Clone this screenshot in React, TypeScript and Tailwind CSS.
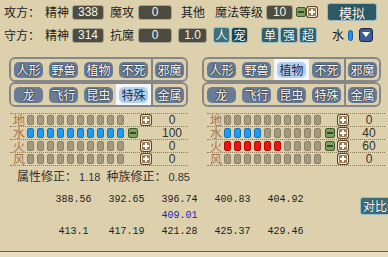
import React from "react";

const rows1 = ["388.56", "392.65", "396.74", "400.83", "404.92"];
const rows3 = ["413.1", "417.19", "421.28", "425.37", "429.46"];

function ValBox({ v, className }: { v: string; className: string }) {
  return (
    <div
      className={`h-[15px] rounded-[3px] border border-[#a4a290] bg-[#4d4c3f] text-[#f4f4ec] flex items-center justify-center text-[12px] leading-none font-['Liberation_Sans',sans-serif] ${className}`}
    >
      {v}
    </div>
  );
}

function TealBtn({ label, className }: { label: string; className: string }) {
  return (
    <div
      className={`flex items-center justify-center rounded-[3px] border border-[#9cbcc4] text-white text-[12px] leading-none [text-shadow:0_0_1px_#0b2a33] ${className}`}
    >
      {label}
    </div>
  );
}

function Minus() {
  return (
    <div className="w-[10px] h-[10px] rounded-[2px] bg-[#7f9f5e] border border-[#3f5a2c] flex items-center justify-center">
      <div className="w-[6px] h-[2px] bg-[#f4f8ee] border-y border-[#34492a]" />
    </div>
  );
}

function Plus() {
  return (
    <div className="relative w-[10px] h-[10px] rounded-[2px] bg-[#9d7c50] border border-[#f1e8d4] shadow-[0_0_0_1px_#5a4428]">
      <div className="absolute left-[3px] top-[1px] w-[2px] h-[6px] bg-white" />
      <div className="absolute left-[1px] top-[3px] w-[6px] h-[2px] bg-white" />
    </div>
  );
}

function CatRow({ items, sel }: { items: string[]; sel: number }) {
  return (
    <div className="flex h-[25px] rounded-[6px] border-2 border-[#878787] overflow-hidden">
      {items.map((t, i) => (
        <div
          key={t}
          className={`w-[35px] h-full flex items-center justify-center ${i === 4 ? "border-l-2 border-[#878787]" : ""} ${i === sel ? "bg-[#f3f6fa]" : ""}`}
        >
          <div
            className={`w-[29px] h-[16px] rounded-[5px] flex items-center justify-center text-[12px] leading-none ${
              i === sel
                ? "bg-[#b3cfec] text-[#16305a]"
                : "bg-[#6a7c95] text-white [text-shadow:0_0_2px_#10141c,0_0_1px_#10141c]"
            }`}
          >
            {t}
          </div>
        </div>
      ))}
    </div>
  );
}

function CatPanel({ sel1, sel2 }: { sel1: number; sel2: number }) {
  return (
    <div className="flex flex-col">
      <CatRow items={["人形", "野兽", "植物", "不死", "邪魔"]} sel={sel1} />
      <CatRow items={["龙", "飞行", "昆虫", "特殊", "金属"]} sel={sel2} />
    </div>
  );
}

type El = { name: string; n: number; color: string; minus: boolean; plus: boolean; v: string };

function ElemRows({ list, className }: { list: El[]; className: string }) {
  return (
    <div className={`border-t border-dotted border-[#8f7f5c] ${className}`}>
      {list.map((e) => (
        <div key={e.name} className="flex items-center h-[13px] border-b border-dotted border-[#8f7f5c] pl-[3px]">
          <span className="w-[12px] text-[12px] leading-none text-[#a9714a]">{e.name}</span>
          <div className="ml-[2px] flex gap-[3px]">
            {Array.from({ length: 10 }).map((_, i) => (
              <div
                key={i}
                className={`w-[7px] h-[10px] rounded-[2px] border ${
                  i < e.n ? `${e.color}` : "bg-[#a39a7e] border-[#8a8168]"
                }`}
              />
            ))}
          </div>
          <div className="ml-[4px] w-[10px]">{e.minus && <Minus />}</div>
          <div className="ml-[3px] w-[10px]">{e.plus && <Plus />}</div>
          <span className="ml-[6px] w-[30px] text-center text-[12px] leading-none text-[#333] font-['Liberation_Sans',sans-serif]">
            {e.v}
          </span>
        </div>
      ))}
    </div>
  );
}

const blue = "bg-[#1f9bf0] border-[#1577c2]";
const red = "bg-[#f01212] border-[#b30a0a]";

const left: El[] = [
  { name: "地", n: 0, color: blue, minus: false, plus: true, v: "0" },
  { name: "水", n: 10, color: blue, minus: true, plus: false, v: "100" },
  { name: "火", n: 0, color: red, minus: false, plus: true, v: "0" },
  { name: "风", n: 0, color: blue, minus: false, plus: true, v: "0" },
];

const right: El[] = [
  { name: "地", n: 0, color: blue, minus: false, plus: true, v: "0" },
  { name: "水", n: 4, color: blue, minus: true, plus: true, v: "40" },
  { name: "火", n: 6, color: red, minus: true, plus: true, v: "60" },
  { name: "风", n: 0, color: blue, minus: false, plus: true, v: "0" },
];

export default function App() {
  return (
    <div className="w-[388px] h-[257px] overflow-hidden bg-[#ddd1ad] flex flex-col text-[#1c1c1c] font-['Noto_Sans_CJK_SC',sans-serif] text-[12px]">
      {/* attacker */}
      <div className="mt-[3px] h-[18px] flex items-center pl-[4px] leading-none">
        <span>攻方：</span>
        <span className="ml-[5px]">精神</span>
        <ValBox v="338" className="ml-[3px] w-[32px]" />
        <span className="ml-[6px]">魔攻</span>
        <ValBox v="0" className="ml-[4px] w-[34px]" />
        <span className="ml-[9px]">其他</span>
        <span className="ml-[10px]">魔法等级</span>
        <ValBox v="10" className="ml-[3px] w-[27px]" />
        <div className="ml-[3px] flex gap-[1px]">
          <Minus />
          <Plus />
        </div>
        <TealBtn label="模拟" className="ml-[10px] w-[50px] h-[18px] bg-[#2c5965] text-[13px]" />
      </div>

      {/* defender */}
      <div className="mt-[5px] h-[18px] flex items-center pl-[4px] leading-none">
        <span>守方：</span>
        <span className="ml-[5px]">精神</span>
        <ValBox v="314" className="ml-[3px] w-[32px]" />
        <span className="ml-[6px]">抗魔</span>
        <ValBox v="0" className="ml-[4px] w-[34px]" />
        <ValBox v="1.0" className="ml-[6px] w-[29px]" />
        <TealBtn label="人" className="ml-[6px] w-[17px] h-[16px] bg-[#3a7282]" />
        <TealBtn label="宠" className="ml-[1px] w-[17px] h-[16px] bg-[#1d4854]" />
        <TealBtn label="单" className="ml-[13px] w-[18px] h-[16px] bg-[#2f6270]" />
        <TealBtn label="强" className="ml-[1px] w-[18px] h-[16px] bg-[#2f6270]" />
        <TealBtn label="超" className="ml-[1px] w-[18px] h-[16px] bg-[#2f6270]" />
        <span className="ml-[15px]">水</span>
        <div className="ml-[4px] w-[5px] h-[11px] rounded-full bg-[#1e90f0] border border-[#0f62b0]" />
        <div className="ml-[6px] w-[14px] h-[14px] rounded-[3px] bg-[#3d5a92] border border-[#1e2a48] flex items-center justify-center">
          <svg width="8" height="6" viewBox="0 0 8 6">
            <path d="M0 0H8L4 5Z" fill="#ffffff" />
          </svg>
        </div>
      </div>

      {/* categories */}
      <div className="mt-[13px] flex pl-[9px] gap-[14px]">
        <CatPanel sel1={-1} sel2={3} />
        <CatPanel sel1={2} sel2={-1} />
      </div>

      {/* elements */}
      <div className="mt-[6px] flex">
        <ElemRows list={left} className="ml-[10px] w-[178px]" />
        <ElemRows list={right} className="ml-[19px] w-[178px]" />
      </div>

      {/* modifiers */}
      <div className="mt-[3px] h-[14px] flex items-baseline pl-[17px] leading-[14px] text-[#333]">
        <span>属性修正：</span>
        <span className="ml-[2px] font-['Liberation_Sans',sans-serif] text-[11px]">1.18</span>
        <span className="ml-[6px]">种族修正：</span>
        <span className="ml-[2px] font-['Liberation_Sans',sans-serif] text-[11px]">0.85</span>
      </div>

      {/* results */}
      <div className="mt-[9px] flex font-['Liberation_Mono',monospace] text-[10px] leading-none text-[#222]">
        <div className="ml-[47px] grid grid-cols-[repeat(5,53px)] auto-rows-[16px] items-center">
          {rows1.map((n) => (
            <span key={n} className="text-center">{n}</span>
          ))}
          <span />
          <span />
          <span className="text-center text-[#1d1db8]">409.01</span>
          <span />
          <span />
          {rows3.map((n) => (
            <span key={n} className="text-center">{n}</span>
          ))}
        </div>
        <TealBtn
          label="对比结果"
          className="ml-[48px] mt-[5px] w-[60px] shrink-0 h-[18px] bg-[#3a6b78] justify-start pl-[2px] font-['Noto_Sans_CJK_SC',sans-serif] text-[12px]"
        />
      </div>

      <div className="flex-1" />
      <div className="h-[1px] bg-[#6b6340]" />
      <div className="h-[5px] bg-[#e6ddc2]" />
    </div>
  );
}
